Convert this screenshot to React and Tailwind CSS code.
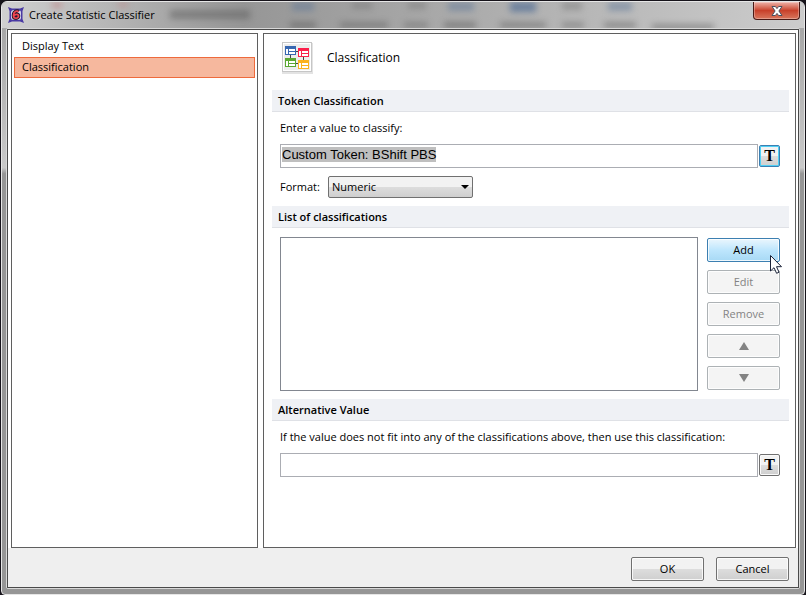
// App.jsx
// "Create Statistic Classifier" dialog: page list on the left, classification form on the right.

import { useEffect, useRef, useState } from 'react'

const PAGES = ['Display Text', 'Classification']

// Toolbar shapes that show through the glass title bar: [x, y, width, height, color]
const GLASS_SPOTS = [
  [168, 8, 80, 9, '#5c5c5c'],
  [50, 0, 10, 6, '#c07070'],
  [116, 0, 10, 5, '#c08080'],
  [290, 0, 22, 9, '#5f7898'],
  [350, 0, 20, 7, '#777777'],
  [406, 0, 18, 7, '#777777'],
  [446, 0, 26, 9, '#5f7898'],
  [508, 0, 26, 10, '#2d558c'],
  [560, 0, 20, 8, '#7a7a7a'],
  [606, 0, 24, 9, '#5f7898'],
  [288, 20, 26, 6, '#555555'],
  [338, 20, 48, 6, '#606060'],
  [402, 20, 24, 6, '#6a6a6a'],
  [442, 20, 32, 6, '#555555'],
  [498, 20, 46, 6, '#606060'],
  [560, 20, 22, 6, '#6a6a6a'],
  [602, 20, 32, 6, '#606060'],
  [650, 22, 62, 6, '#606060'],
]

export default function App() {
  const [page, setPage] = useState('Classification')
  const valueRef = useRef(null)

  useEffect(() => {
    valueRef.current?.focus()
    valueRef.current?.select()
  }, [])

  return (
    <div className="min-h-screen bg-[#16131a] font-['Open_Sans',sans-serif] text-[11px] text-black flex flex-col">
      <div className="flex-1 flex flex-col m-px mb-0 rounded-t-md rounded-b-sm border border-[#e6e6e6] bg-linear-to-b from-[#a8a8a8] from-5% via-[#c9c9c9] via-28% to-[#969696] to-29% px-1 pb-[5px] overflow-hidden">
        <TitleBar />
        <div className="flex-1 flex flex-col border border-[#d8d8d8] rounded-xs">
          <div className="flex-1 flex flex-col border border-[#4a4a4a] bg-[#efefef]">
            <div className="flex-1 flex gap-[5px] bg-white pl-[3px] pr-0.5 pt-[3px]">
              <nav className="w-[247px] shrink-0 border border-[#5f5f5f] p-0.5">
                {PAGES.map(p => (
                  <button
                    key={p}
                    type="button"
                    onClick={() => setPage(p)}
                    className={`block w-full h-[21px] px-[7px] text-left border ${p === page ? 'bg-[#f6b89e] border-[#ee6a3c]' : 'border-transparent'}`}
                  >
                    {p}
                  </button>
                ))}
              </nav>
              <main className="flex-1 min-w-0 border border-[#5f5f5f] pl-2 pr-1.5">
                <div className="flex items-center h-12 mb-2 pl-2.5 gap-3.5">
                  <ClassificationIcon />
                  <h1 className="text-xs">Classification</h1>
                </div>

                <Section title="Token Classification">
                  <label htmlFor="value" className="block h-8 leading-8">Enter a value to classify:</label>
                  <TokenInput id="value" inputRef={valueRef} defaultValue="Custom Token: BShift PBS" active />
                  <div className="flex items-center gap-2 py-2">
                    <label htmlFor="format" className="w-10">Format:</label>
                    <div className="relative">
                      <select
                        id="format"
                        className="block appearance-none w-[145px] h-[22px] pl-[3px] rounded-xs border border-[#707070] bg-linear-to-b from-[#f2f2f2] from-50% via-[#dddddd] via-50% to-[#cfcfcf]"
                      >
                        <option>Numeric</option>
                      </select>
                      <svg className="absolute right-1 top-[9px] pointer-events-none" width="8" height="4" viewBox="0 0 8 4">
                        <path d="M0 0h8L4 4z" fill="#000" />
                      </svg>
                    </div>
                  </div>
                </Section>

                <Section title="List of classifications">
                  <div className="flex gap-[9px] pt-[9px] pb-2">
                    <ul aria-label="Classifications" className="flex-1 h-[154px] border border-[#828790]" />
                    <div className="w-[73px] pt-px flex flex-col gap-2">
                      <div className="relative flex">
                        <Button hot>Add</Button>
                        <Pointer />
                      </div>
                      <Button disabled>Edit</Button>
                      <Button disabled>Remove</Button>
                      <Button disabled label="Move up"><Arrow d="M5 0l5 8H0z" /></Button>
                      <Button disabled label="Move down"><Arrow d="M0 0h10L5 8z" /></Button>
                    </div>
                  </div>
                </Section>

                <Section title="Alternative Value">
                  <label htmlFor="alternative" className="block h-8 leading-8">
                    If the value does not fit into any of the classifications above, then use this classification:
                  </label>
                  <TokenInput id="alternative" />
                </Section>
              </main>
            </div>
            <footer className="flex justify-end gap-3 pt-[9px] pb-1.5 pr-[9px]">
              <div className="w-[73px] flex"><Button>OK</Button></div>
              <div className="w-[73px] flex"><Button>Cancel</Button></div>
            </footer>
          </div>
        </div>
      </div>
    </div>
  )
}

function TitleBar() {
  return (
    <header className="relative flex items-start justify-between h-[26px] pl-0.5">
      <div className="absolute inset-0 -mx-1 overflow-hidden bg-linear-to-r from-[#d0d0d0] via-[#969696] via-30% to-[#cccccc]" aria-hidden="true">
        <svg className="blur-[3px] opacity-50" width="804" height="28" viewBox="0 0 804 28">
          {GLASS_SPOTS.map(([x, y, w, h, color]) => (
            <rect key={`${x}-${y}`} x={x} y={y} width={w} height={h} fill={color} />
          ))}
        </svg>
      </div>
      <div className="relative flex items-center gap-[5px] h-[26px]">
        <AppIcon />
        <span>Create Statistic Classifier</span>
      </div>
      <button
        type="button"
        aria-label="Close"
        className="relative w-[47px] h-[18px] rounded-b-sm border border-t-0 border-[#4a1a16] bg-linear-to-b from-[#eaa79c] from-5% via-[#c8402a] via-50% to-[#d8755c] inset-ring inset-ring-white/30 flex items-center justify-center"
      >
        <svg width="12" height="10" viewBox="0 0 12 10">
          <path d="M1 .5h3.400L6 2.600 7.600.5H11L7.900 5 11 9.500H7.600L6 7.400 4.400 9.500H1L4.100 5z" fill="#fff" stroke="#4b4f5e" strokeWidth="1" />
        </svg>
      </button>
    </header>
  )
}

function Section({ title, children }) {
  return (
    <section>
      <h2 className="h-[22px] leading-[21px] pl-1.5 font-semibold bg-[#eff1f5] border-b border-[#dfe1e6]">{title}</h2>
      <div className="pl-2 pr-[9px]">{children}</div>
    </section>
  )
}

function TokenInput({ id, inputRef, defaultValue, active }) {
  return (
    <div className="flex items-center gap-px">
      <input
        id={id}
        ref={inputRef}
        type="text"
        defaultValue={defaultValue}
        className="flex-1 min-w-0 h-6 px-px pb-1 border border-[#abadb3] bg-white font-['Liberation_Sans',sans-serif] text-[13px] outline-none selection:bg-[#bfbfbf] selection:text-black"
      />
      <button
        type="button"
        aria-label="Insert token"
        className={`w-[21px] h-[22px] rounded-xs border font-['Liberation_Serif',serif] font-bold text-base leading-5 bg-linear-to-b from-[#f2f2f2] from-50% via-[#dddddd] via-50% to-[#cfcfcf] ${active ? 'border-[#3c7fb1] inset-ring inset-ring-[#4fd0f5]' : 'border-[#707070] inset-ring inset-ring-[#fafafa]'}`}
      >
        T
      </button>
    </div>
  )
}

function Button({ children, hot, disabled, label }) {
  const look = disabled
    ? 'border-[#adb2b5] bg-[#f4f4f4] text-[#838383]'
    : hot
      ? 'border-[#3c7fb1] bg-linear-to-b from-[#eaf6fd] from-0% via-[#bee6fd] via-50% to-[#a7d9f5]'
      : 'border-[#707070] bg-linear-to-b from-[#f2f2f2] from-50% via-[#dddddd] via-50% to-[#cfcfcf]'
  return (
    <button
      type="button"
      disabled={disabled}
      aria-label={label}
      className={`w-full h-6 flex items-center justify-center rounded-xs border inset-ring inset-ring-white/80 ${look}`}
    >
      {children}
    </button>
  )
}

function Arrow({ d }) {
  return (
    <svg width="10" height="8" viewBox="0 0 10 8">
      <path d={d} fill="#838383" />
    </svg>
  )
}

function Pointer() {
  return (
    <svg className="absolute left-[63px] top-[17px] z-10 pointer-events-none" width="12" height="19" viewBox="0 0 12 19">
      <path d="M.5.5v15.500l3.500-3.300 2.600 5.600 2.400-1.100-2.500-5.500h5z" fill="#fff" stroke="#1b2238" />
    </svg>
  )
}

function AppIcon() {
  return (
    <svg width="16" height="16" viewBox="0 0 16 16">
      <path d="M0 0l4 1.500h8L16 0l-1.500 4v8l1.500 4-4-1.500H4L0 16l1.500-4V4z" fill="#4a3aa4" />
      <rect x="3" y="3" width="10" height="10" rx="2.500" fill="#d3d3ea" />
      <path d="M10.500 4.800C9 3.200 5.500 4.500 5.500 8.500c0 3.800 5 3.300 5 .6 0-2.300-3.200-2.300-4.500-.3" fill="none" stroke="#2a1a30" strokeWidth="3.600" strokeLinejoin="round" />
      <path d="M10.500 4.800C9 3.200 5.500 4.500 5.500 8.500c0 3.800 5 3.300 5 .6 0-2.300-3.200-2.300-4.500-.3" fill="none" stroke="#f04550" strokeWidth="1.700" />
    </svg>
  )
}

function ClassificationIcon() {
  return (
    <svg width="31" height="32" viewBox="0 0 31 32">
      <rect x="0" y="1" width="31" height="31" fill="#e3e3e3" />
      <rect x=".5" y=".5" width="29" height="29" fill="#ececec" stroke="#c6c6c6" />
      <rect x="1.500" y="1.500" width="27" height="27" fill="none" stroke="#fff" />
      <path d="M14 9.500h2M21.500 15v3M8.500 13v3M14 21.500h2" stroke="#444" fill="none" />
      <Node x={3} y={4} color="#3767b1" />
      <Node x={16} y={6} color="#fb1f4b" />
      <Node x={3} y={16} color="#5aa832" />
      <Node x={16} y={18} color="#fbb320" />
    </svg>
  )
}

function Node({ x, y, color }) {
  return (
    <g transform={`translate(${x} ${y})`}>
      <rect width="11" height="9" fill={color} />
      <path d="M1 3h2v5H1zM4 3h6v2H4zM4 6h6v2H4z" fill="#fff" />
    </g>
  )
}
